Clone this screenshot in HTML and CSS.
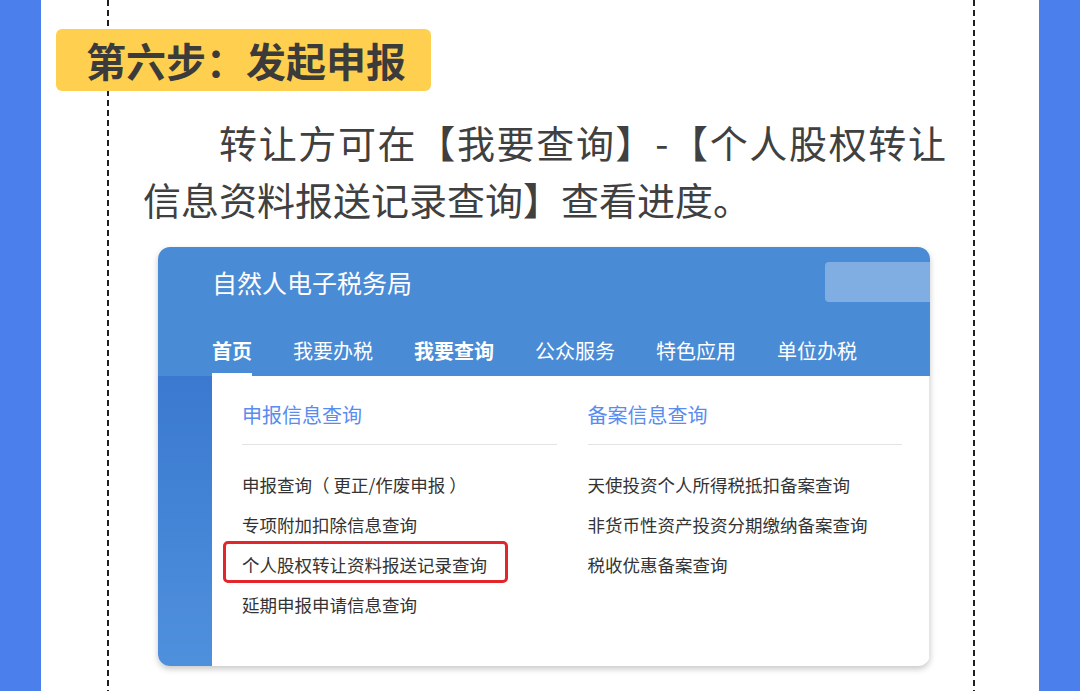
FILE: index.html
```html
<!DOCTYPE html>
<html lang="zh-CN">
<head>
  <meta charset="UTF-8">
  <meta name="viewport" content="width=device-width, initial-scale=1.0">
  <link rel="stylesheet" href="styles.css">
</head>
<body>
  <div class="page">
    <div class="band"></div>

    <!-- Main sheet with dashed guide lines -->
    <main class="sheet">
      <div class="frame">
        <h2 class="step">第六步：发起申报</h2>
        <p class="desc">转让方可在【我要查询】-【个人股权转让信息资料报送记录查询】查看进度。</p>

        <!-- Tax bureau portal screenshot -->
        <div class="shot">
          <header class="shot-head">
            <div class="shot-top">
              <span class="shot-title">自然人电子税务局</span>
              <span class="shot-search"></span>
            </div>
            <nav class="shot-nav">
              <span class="nav-item active bold">首页</span>
              <span class="nav-item">我要办税</span>
              <span class="nav-item bold">我要查询</span>
              <span class="nav-item">公众服务</span>
              <span class="nav-item">特色应用</span>
              <span class="nav-item">单位办税</span>
            </nav>
          </header>

          <div class="shot-body">
            <div class="shot-side"></div>
            <div class="shot-panel">
              <section class="menu-col">
                <h3>申报信息查询</h3>
                <ul>
                  <li><span>申报查询（ 更正/作废申报 ）</span></li>
                  <li><span>专项附加扣除信息查询</span></li>
                  <li><span class="marked">个人股权转让资料报送记录查询</span></li>
                  <li><span>延期申报申请信息查询</span></li>
                </ul>
              </section>
              <section class="menu-col">
                <h3>备案信息查询</h3>
                <ul>
                  <li><span>天使投资个人所得税抵扣备案查询</span></li>
                  <li><span>非货币性资产投资分期缴纳备案查询</span></li>
                  <li><span>税收优惠备案查询</span></li>
                </ul>
              </section>
            </div>
          </div>
        </div>
      </div>
    </main>

    <div class="band"></div>
  </div>
</body>
</html>
```

FILE: styles.css
```css
/* General Styles */
html, body {
  margin: 0;
  padding: 0;
  height: 691px;
  overflow: hidden;
}

body {
  font-family: "Noto Sans CJK SC", "Noto Sans", sans-serif;
  background-color: #FFFFFF;
  color: #404040;
}

.page {
  display: flex;
  height: 691px;
}

/* Blue side bands */
.band {
  width: 41px;
  flex-shrink: 0;
  background-color: #4B7FEB;
}

.sheet {
  flex: 1;
  background-color: #FFFFFF;
}

/* Dashed guide lines on both sides */
.frame {
  width: 868px;
  height: 100%;
  margin-left: 66px;
  padding-top: 29px;
  box-sizing: border-box;
  background:
    linear-gradient(#1E1E1E 62%, transparent 0) left top / 2px 10px repeat-y,
    linear-gradient(#1E1E1E 62%, transparent 0) right top / 2px 10px repeat-y;
}

/* Step badge */
.step {
  display: block;
  width: fit-content;
  margin: 0 0 0 -51px;
  padding: 0 25px 0 30px;
  height: 62px;
  line-height: 62px;
  background-color: #FFD04F;
  border-radius: 6px;
  font-size: 40px;
  font-weight: 700;
  color: #3B3B3B;
}

.desc {
  width: 803px;
  margin: 22px 0 0 36px;
  font-size: 38px;
  line-height: 57px;
  text-indent: 2em;
  text-align: justify;
  color: #404040;
}

/* Screenshot card */
.shot {
  display: flex;
  flex-direction: column;
  width: 772px;
  height: 419px;
  margin: 20px 0 0 51px;
  border-radius: 12px;
  overflow: hidden;
  background-color: #FFFFFF;
  box-shadow: 0 3px 6px rgba(0, 0, 0, 0.22);
}

.shot-head {
  height: 129px;
  padding-top: 15px;
  box-sizing: border-box;
  background-color: #4A8BD6;
}

.shot-top {
  display: flex;
  align-items: center;
  height: 40px;
  padding-left: 54px;
}

.shot-title {
  font-size: 25px;
  line-height: 40px;
  color: #FFFFFF;
}

.shot-search {
  margin-left: auto;
  width: 105px;
  height: 40px;
  background-color: #80AEE3;
  border-radius: 4px 0 0 4px;
}

.shot-nav {
  display: flex;
  gap: 41px;
  margin-top: 34px;
  padding-left: 54px;
}

.nav-item {
  position: relative;
  font-size: 20px;
  line-height: 30px;
  padding-bottom: 10px;
  color: #FFFFFF;
}

.nav-item.bold {
  font-weight: 700;
}

.nav-item.active::after {
  content: "";
  position: absolute;
  left: 0;
  right: 0;
  bottom: 0;
  height: 3px;
  background-color: #FFFFFF;
}

.shot-body {
  flex: 1;
  display: flex;
}

.shot-side {
  width: 54px;
  background: linear-gradient(#3A79CF, #4F90DD);
}

.shot-panel {
  flex: 1;
  display: flex;
  gap: 31px;
  padding: 24px 27px 0 30px;
  border-right: 1px solid #E4E4E4;
}

.menu-col {
  flex: 1;
}

.menu-col h3 {
  margin: 0;
  padding-bottom: 14px;
  border-bottom: 1px solid #E3E3E3;
  font-size: 20px;
  line-height: 30px;
  font-weight: 400;
  color: #5A8CEF;
}

.menu-col ul {
  margin: 20px 0 0;
  padding: 0;
  list-style: none;
}

.menu-col li {
  font-size: 17.5px;
  line-height: 40px;
  color: #333333;
}

.menu-col li span {
  display: inline-block;
  height: 40px;
}

/* Red highlight around the target entry */
.marked {
  position: relative;
}

.marked::after {
  content: "";
  position: absolute;
  top: -4px;
  right: -21px;
  bottom: 2px;
  left: -19px;
  border: 3px solid #E3262B;
  border-radius: 5px;
}
```
